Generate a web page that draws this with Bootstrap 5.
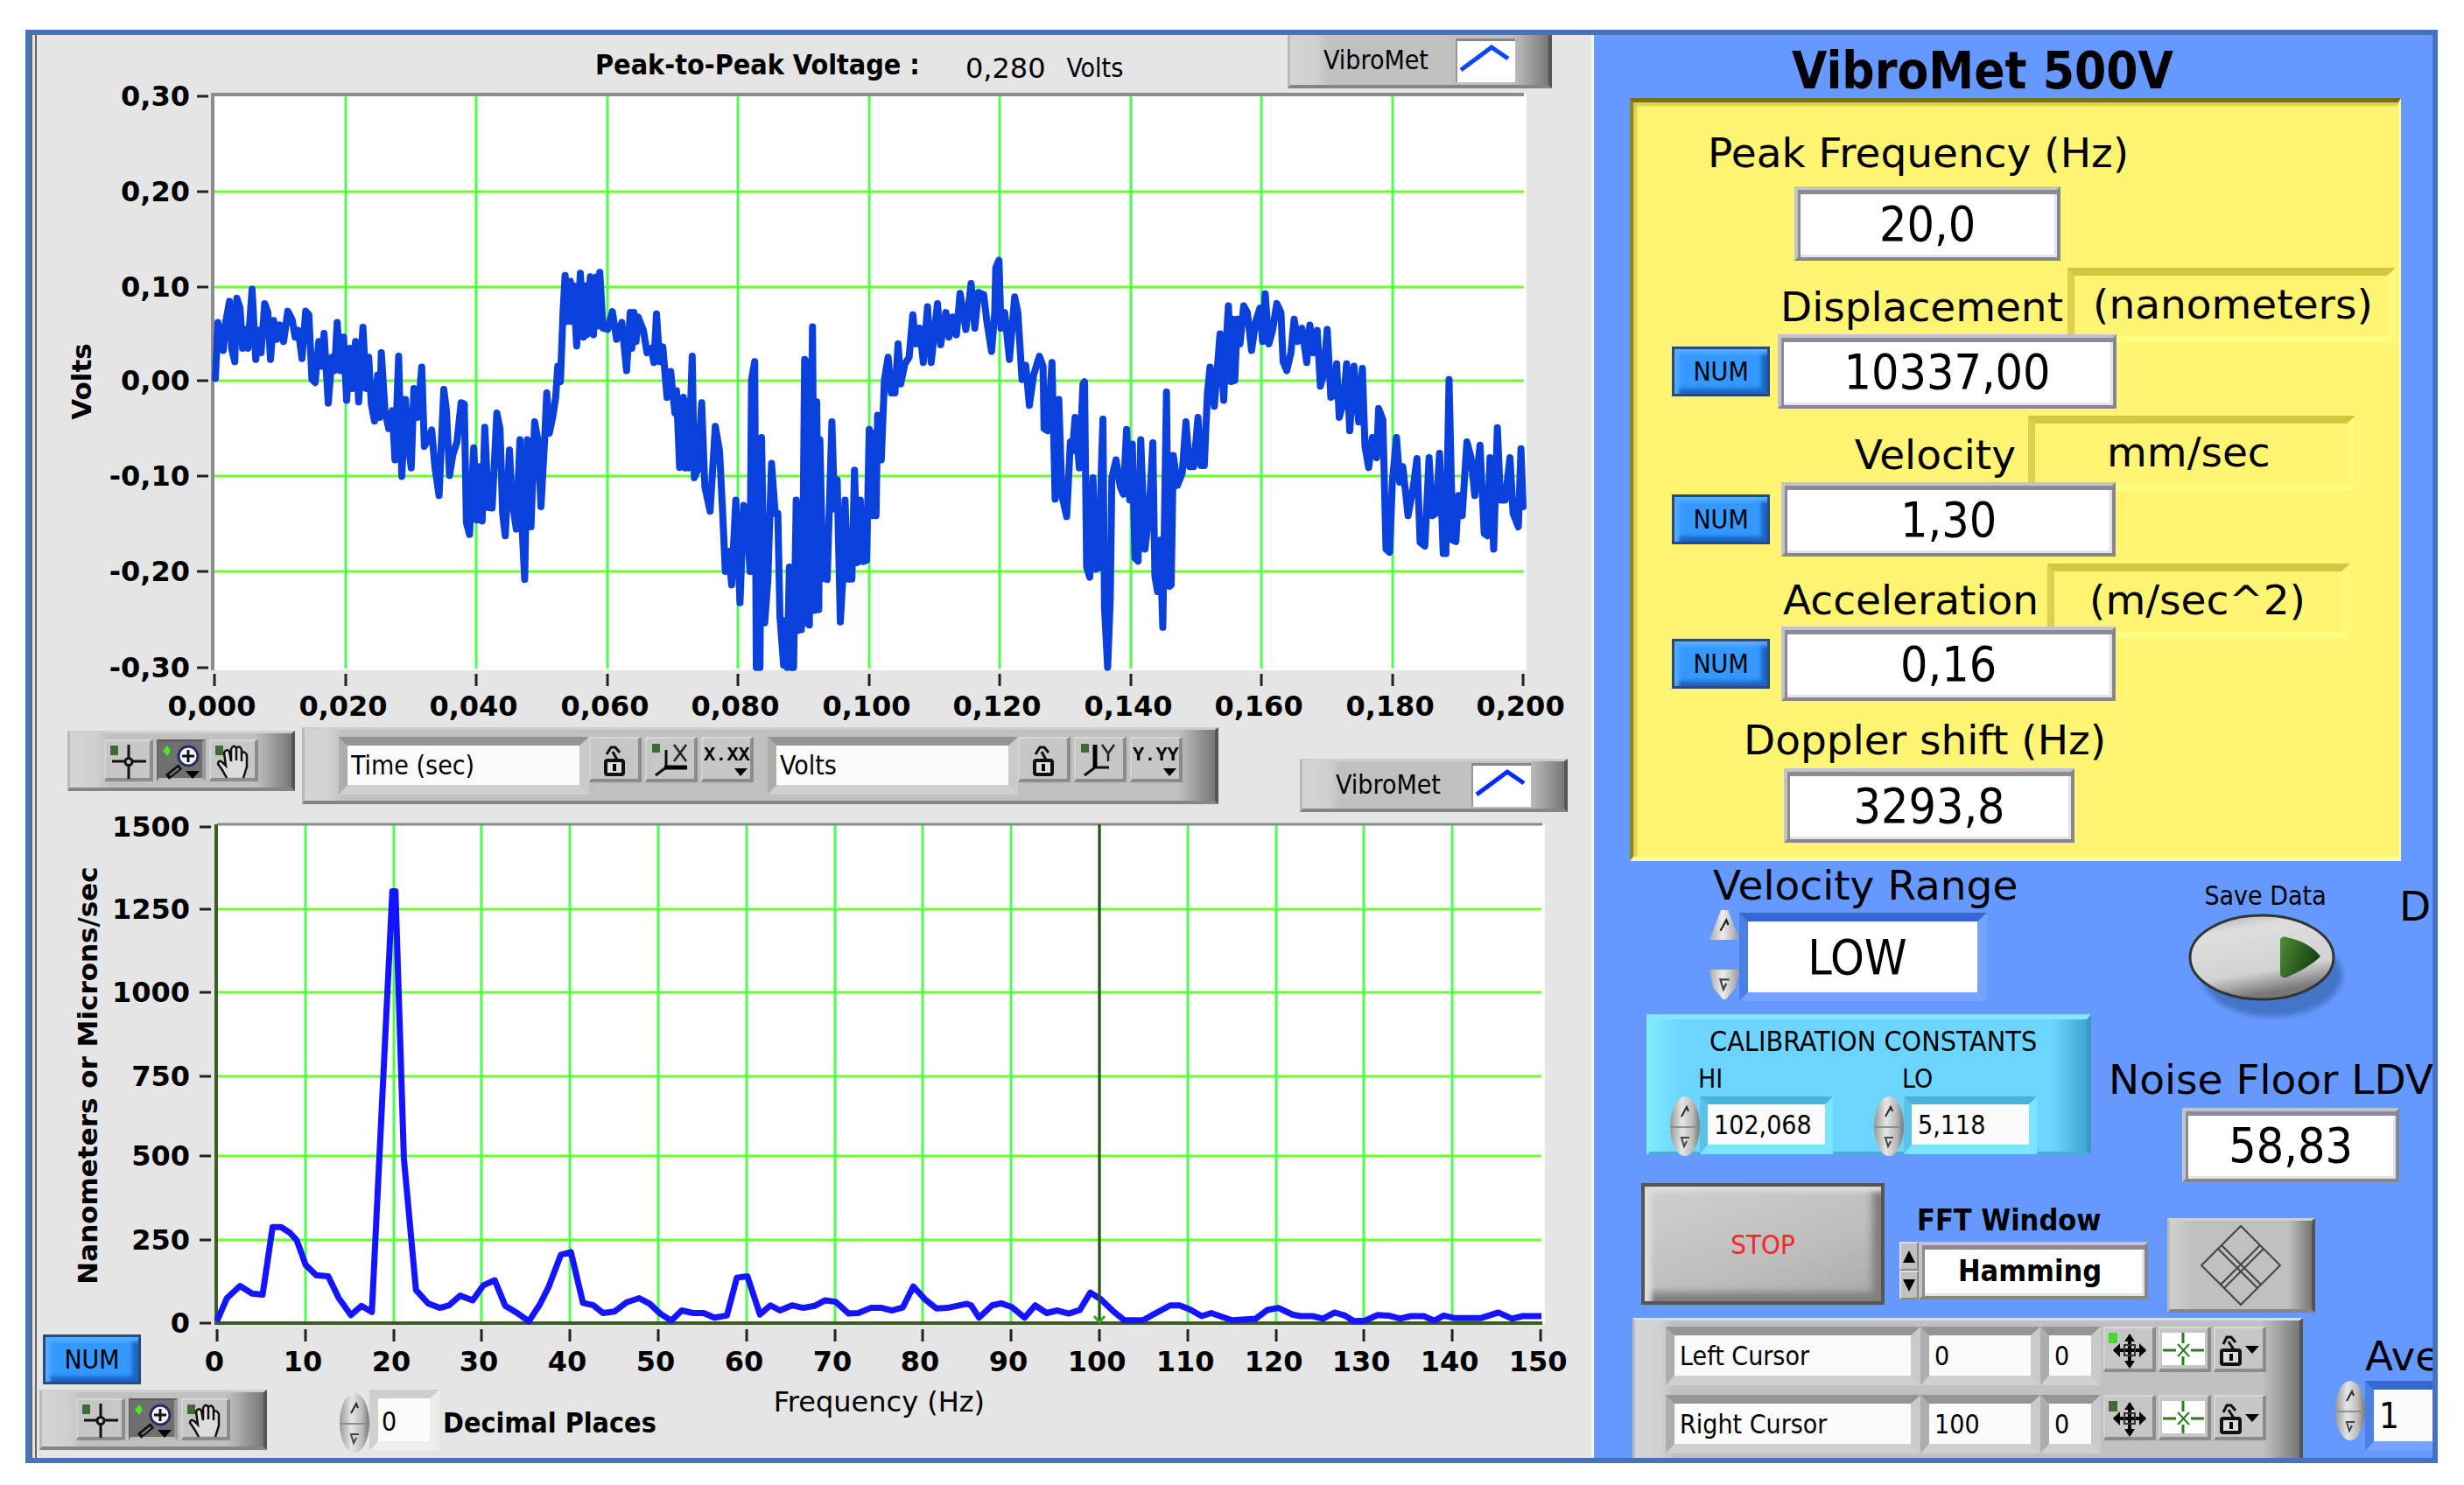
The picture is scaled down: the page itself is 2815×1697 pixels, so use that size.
<!doctype html>
<html lang="en">
<head>
<meta charset="utf-8">
<meta name="viewport" content="width=device-width, initial-scale=1">
<title>VibroMet 500V</title>
<link href="https://cdn.jsdelivr.net/npm/bootstrap@5.3.0/dist/css/bootstrap.min.css" rel="stylesheet">
<style>
:root{--wide:"DejaVu Sans",Verdana,sans-serif;--narrow:"DejaVu Sans Condensed","DejaVu Sans",Tahoma,sans-serif}
body{background:#fff;color:#000;font-family:var(--narrow);font-size:30px;line-height:36px}
.app-frame{margin:34px 30px 27px 29px;border:6px solid #4472c4;overflow:hidden}
button,input,select{font-family:inherit;color:#000;border-radius:0}
button{padding:0;border:0}
svg{display:block}
/* left side */
.scope{flex:0 0 65.09%;background:#e5e5e5;border-left:7px double #666;border-right:3px solid #f7f7f7}
.plot{width:100%;height:auto;overflow:visible}
.plot text{font-family:var(--wide);font-weight:bold;font-size:32px}
.plot .axis-name{font-size:31px}
.grid-h{stroke:#6dff2c;stroke-width:3}
.grid-v{stroke:#4dff4d;stroke-width:3}
.tick{stroke:#222;stroke-width:3}
.head-row{height:66px;padding-left:638px}
.t-wide{font-family:var(--wide);font-size:32px}
.t-bold{font-weight:bold;font-size:32px}
.freq-name{margin-left:134px;margin-top:-4px}
.bar-metal{border:solid;border-width:3px 4px 4px 3px;border-color:#cfcfcf #555 #858585 #b9b9b9;background:linear-gradient(90deg,#d4d4d4 0,#d0d0d0 30px,#c0c0c0 44px,#c0c0c0 calc(100% - 44px),#b4b4b4 calc(100% - 34px),#777 100%)}
.legend-box{width:306px;height:61px;padding:0 38px 0 38px}
.legend-box svg{width:68px;height:50px;background:#fff;border-top:3px solid #888;border-left:2px solid #999}
.legend-top{width:302px;margin-right:45px}
.legend-low{margin-right:27px}
.tools-row{height:110px;padding:5px 0 0 35px}
.palette{width:260px;height:69px;padding:7px 0 0 39px;gap:4px}
.scale-bar{width:1047px;height:88px;padding:8px 0 0 39px}
.tool{width:56px;height:48px;background:#c6c6c6;border:solid;border-width:2px 4px 4px 2px;border-color:#d8d8d8 #8c8c8c #8c8c8c #d4d4d4}
.tool svg{width:56px;height:48px;margin:-2px 0 0 -2px}
.tool.on{background:#6f6f6f;border-color:#5a5a5a #999 #bbb #666}
.tool.tall{width:60px;height:52px}
.tool.tall svg{width:60px;height:52px}
.field{border:solid;border-width:10px 11px 11px 10px;border-color:#959595 #cacaca #d0d0d0 #adadad;background:#fbfbfb;padding:0 0 0 6px;font-size:30px;line-height:36px;min-width:0}
.scale-bar .field{width:286px;height:66px;padding-left:4px}
.dec-field{width:80px;height:70px;border-color:#cfcfcf #ededed #ededed #cfcfcf;padding:4px 0 0 4px}
.dec-spin{margin-left:83px}
.num-btn{width:112px;height:57px;border:3px solid #2a4a78;background:#3399ff;box-shadow:inset 5px 5px 4px #55adff,inset -7px -6px 4px #1b66c4;font-size:30px;line-height:36px}
.num-over{left:7px;bottom:-6px}
.foot-row{height:88px;padding:12px 0 0 3px}
.spin{width:34px;height:68px}
.spin button{height:34px;width:34px;background:linear-gradient(90deg,#999,#e6e6e6 40%,#bbb 75%,#777)}
.spin button:first-child{border-radius:50% 50% 0 0/100% 100% 0 0}
.spin button:last-child{border-radius:0 0 50% 50%/0 0 100% 100%;border-top:2px solid #8d8d8d}
.spin svg{width:14px;height:16px;margin:0 auto}
/* right side */
.control{background:#69f;min-width:0}
.head-title{font-size:58px;line-height:61px;font-weight:bold;height:72px;padding:11px 0 0 226px;margin:0}
.readings{margin:0 36px 0 41px;height:872px;background:#fff573;border:solid;border-width:5px 3px 5px 4px;border-color:#77711c #fffca0 #fffca0 #8c8530;box-shadow:inset 4px 4px 3px #d8cf4c}
.big-label{font-family:var(--wide);font-size:47px;line-height:56px;white-space:nowrap;margin:0}
.line-peak{height:96px;padding:30px 0 0 85px}
.line-doppler{padding:17px 0 4px 126px}
.line-unit{height:76px;margin-top:8px}
.line-unit.snug{height:72px}
.line-unit .big-label{padding-top:17px;text-align:right}
.line-unit.snug .big-label{padding-top:14px}
.w-disp{width:491px}
.w-velo{width:437px}
.w-acce{width:463px}
.unit{height:86px;border:solid;border-width:9px 10px 8px 8px;border-color:#d3c740 #fff87a #fffd80 #dcd14e;background:#fff573;margin-left:5px;padding-left:21px;font-family:var(--wide);font-size:47px;line-height:66px}
.u-disp{width:375px}.u-velo{width:374px;margin-left:14px;padding-left:82px}.u-acce{width:346px;margin-left:10px;padding-left:40px}
.readout{height:85px;border:4px solid;border-color:#c3c3cb #86868c #86868c #c3c3cb;box-shadow:inset 3px 5px 0 #8b8b90,inset -3px -3px 0 #e3e3ea;background:#fff;text-align:center;font-size:55px;line-height:64px;padding:0;position:relative}
.line-value{padding-left:44px;gap:9px}
.line-value .readout{width:382px}
.line-value .readout.widest{width:387px}
.r-peak{width:304px;margin-left:184px}.r-doppler{width:332px;margin-left:172px}.r-noise{width:248px}
.row-a{height:175px}
.vr-block{width:614px;padding-left:132px}
.vr-block .big-label{padding-left:4px}
.arrow-col{width:34px;height:102px}
.arrow-col button{width:34px;height:34px;background:linear-gradient(90deg,#aaa,#eee 45%,#999)}
.arrow-col button:first-child{clip-path:polygon(38% 0,62% 0,100% 100%,0 100%)}
.arrow-col button:last-child{clip-path:polygon(0 0,100% 0,88% 60%,55% 100%,45% 100%,12% 60%)}
.arrow-col svg{width:16px;height:18px;margin:0 auto}
.low-box{width:283px;height:101px;margin-top:3px;border:solid;border-width:10px 11px 10px 10px;border-color:#3468d0 #75a3ff #75a3ff #4a7fe6;background:#fff;font-size:55px;line-height:76px;text-align-last:center;appearance:none;padding:0 12px 0 0}
.save-block{width:210px;padding-top:22px}
.save-block button{background:none}
.row-b{height:193px;padding-left:60px}
.calib{width:508px;height:161px;border:solid;border-width:6px 5px 4px 4px;border-color:#86e6ff #3c98c4 #4badd8 #80ecff;background:linear-gradient(90deg,#7ceaff,#6cd5ff 36px,#6cd5ff calc(100% - 40px),#3fa6d4)}
.calib-title{font-size:32px;padding:7px 0 5px 68px;margin:0}
.calib-row{padding-left:23px}
.calib .field{width:152px;height:66px;border-color:#4db2da #7de4ff #7de4ff #5cc1e8;border-width:9px 9px 11px 9px;padding-left:7px}
.calib label{padding-left:32px;line-height:40px}
.calib-cell{width:233px}
.noise{padding:47px 0 0 20px}
.noise .readout{margin:4px 0 0 84px}
.row-c{height:154px;padding-left:54px}
.stop-btn{width:278px;height:139px;background:linear-gradient(160deg,#d0d0d0,#bdbdbd 60%,#a9a9a9);border:4px solid #555;box-shadow:inset 8px 6px 5px #dcdcdc,inset -10px -10px 8px #7f7f7f;color:#f22;font-size:31px}
.fft{padding:17px 0 0 17px}
.fft label{padding-left:20px;font-size:34px;line-height:50px}
.fft-arrows button{width:22px;height:33px;background:#c0c0c0;border:2px solid;border-color:#ddd #888 #888 #ddd}
.fft-arrows svg{width:18px;height:20px}
.fft select{width:262px;height:66px;font-size:34px;line-height:40px;font-weight:bold;text-align-last:center;appearance:none;padding-right:8px}
.diamond{width:169px;height:108px;margin:40px 0 0 22px;background:linear-gradient(90deg,#d0d0d0,#c0c0c0 25px,#c0c0c0 135px,#777)}
.cursors{margin-left:44px;width:766px;height:160px;padding:7px 0 0 35px;border-bottom:0;border-top-color:#ddd}
.cursor-row{height:78px}
.cursor-row .field{height:67px}
.cursor-row .tool{margin-left:3px}
.c1{width:291px}.c2{width:137px}.c3{width:69px}
.ave{padding:16px 0 0 37px}
.ave .big-label{padding-left:34px}
.ave .field{width:170px;height:80px;border-color:#3468d0 #75a3ff #75a3ff #4a7fe6;font-size:40px}
</style>
<script src="https://cdn.jsdelivr.net/npm/bootstrap@5.3.0/dist/js/bootstrap.bundle.min.js"></script>
</head>
<body>
<svg width="0" height="0" class="position-absolute" aria-hidden="true">
<defs>
<symbol id="i-cross" viewBox="0 0 56 48"><rect x="7" y="7" width="9" height="11" fill="#3f6a33"/><path d="M28 6V21M28 30V45M9 25H23M33 25H48" stroke="#111" stroke-width="3"/><circle cx="28" cy="25.500" r="4" fill="none" stroke="#111" stroke-width="3"/></symbol>
<symbol id="i-zoom" viewBox="0 0 56 48"><path d="M12 7l4 6-4 6-5-6z" fill="#47ea24"/><path d="M27 31L12 43" stroke="#111" stroke-width="7"/><path d="M25 33L15 41" stroke="#888" stroke-width="2"/><ellipse cx="36" cy="19" rx="11" ry="11" fill="#f4f4ff" stroke="#2a2a66" stroke-width="3"/><path d="M36 12V26M29 19H43" stroke="#111" stroke-width="3"/><path d="M33 36H49L41 45z" fill="#000"/></symbol>
<symbol id="i-hand" viewBox="0 0 56 48"><path d="M19 43L15 35 10 28 12 24 17 28 19 30 18 13 22 11 25 24 26 9 30 7 32 10 36 9 38 14 42 15 44 30 39 43z" fill="#ddd"/><rect x="7" y="7" width="9" height="11" fill="#3f6a33"/><path d="M20 44L15 35 10 28Q11 22 16 27L19 30 17 15Q20 10 23 14L25 25V11Q28 5 31 10V24 10Q35 6 37 12V25 15Q41 13 43 18V31L39 44" fill="none" stroke="#111" stroke-width="2.500"/></symbol>
<symbol id="i-lock" viewBox="0 0 60 52"><path d="M20 20L25 12H30L35 18M27 17L33 28" fill="none" stroke="#111" stroke-width="3"/><rect x="19" y="27" width="20" height="16" rx="2" fill="#ddd" stroke="#111" stroke-width="4"/><rect x="27" y="31" width="4" height="8"/></symbol>
<symbol id="i-x" viewBox="0 0 60 52"><rect x="8" y="8" width="9" height="10" fill="#3f6a33"/><path d="M24 15V35L12 44" fill="none" stroke="#111" stroke-width="3"/><path d="M22 35H48" stroke="#000" stroke-width="5"/><path d="M33 9L47 28M47 9L33 28" stroke="#222" stroke-width="2.500"/></symbol>
<symbol id="i-y" viewBox="0 0 60 52"><rect x="8" y="8" width="9" height="10" fill="#3f6a33"/><path d="M24 35L12 44M24 35H40" fill="none" stroke="#111" stroke-width="3"/><path d="M24 9V36" stroke="#000" stroke-width="5"/><path d="M32 9L39 19 46 9M39 19V28" fill="none" stroke="#222" stroke-width="2.500"/></symbol>
<symbol id="i-tri" viewBox="0 0 60 52"><path d="M38 36H53L45 45z"/></symbol>
<symbol id="i-move" viewBox="0 0 60 52"><path d="M30 10V44M12 27H48" stroke="#000" stroke-width="4"/><path d="M30 8l-6 9h12zM30 48l-6-9h12zM11 27l8-8v16zM49 27l-8-8v16z"/><path d="M24 21h12v12H24z" fill="none" stroke="#333" stroke-width="2"/></symbol>
<symbol id="i-star" viewBox="0 0 60 52"><rect x="4" y="7" width="49" height="37" fill="#fff"/><path d="M28 7V19M28 34V44M5 27H20M37 27H52" stroke="#2e7a22" stroke-width="3"/><path d="M22 20L35 34M35 20L22 34" stroke="#2e7a22" stroke-width="2"/></symbol>
<symbol id="i-lockd" viewBox="0 0 60 52"><path d="M11 20L15 12H20L25 18M17 17L24 28" fill="none" stroke="#111" stroke-width="3"/><rect x="9" y="27" width="21" height="16" rx="2" fill="#ddd" stroke="#111" stroke-width="4"/><rect x="18" y="31" width="4" height="8"/><path d="M36 22H52L44 31z"/></symbol>
<symbol id="i-up" viewBox="0 0 14 16"><path d="M3 14L9 3l2 5" fill="none" stroke="#222" stroke-width="2"/></symbol>
<symbol id="i-dn" viewBox="0 0 14 16"><path d="M12 3H3l3 10 3-6" fill="none" stroke="#444" stroke-width="2"/></symbol>
</defs>
</svg>

<main class="app-frame d-flex">
<section class="scope d-flex flex-column" aria-label="Graphs">
  <div class="head-row d-flex align-items-start">
    <label class="t-bold pt-3 text-nowrap" for="ptp">Peak-to-Peak Voltage :</label>
    <output id="ptp" class="t-wide pt-3 mt-1 ms-5 ps-1 text-nowrap">0,280</output><span class="pt-3 mt-1 ms-4">Volts</span>
    <div class="legend-box legend-top bar-metal d-flex align-items-center justify-content-between ms-auto border-top-0"><span>VibroMet</span>
      <svg viewBox="0 0 66 47" aria-hidden="true"><path d="M4 33L39 7 58 20" fill="none" stroke="#0a46ff" stroke-width="5"/></svg></div>
  </div>

  <svg class="plot" viewBox="42 106 1776 720" role="img" aria-label="Voltage against time">
    <rect x="243" y="107" width="1501" height="659" fill="#fff"/>
    <g id="grid-time"></g>
    <path d="M243 766V108H1741" fill="none" stroke="#8c8c8c" stroke-width="4"/>
    <g fill="none" stroke="#0a40dc" stroke-width="8" stroke-linejoin="round" stroke-linecap="round"><path id="wave-time"/></g>
    <text class="axis-name" transform="translate(104 436) rotate(-90)" text-anchor="middle">Volts</text>
  </svg>

  <div class="tools-row d-flex align-items-start">
    <div class="palette bar-metal d-flex align-items-start mt-1">
      <button class="tool" aria-label="Cursor"><svg><use href="#i-cross"/></svg></button>
      <button class="tool on" aria-label="Zoom"><svg><use href="#i-zoom"/></svg></button>
      <button class="tool" aria-label="Pan"><svg><use href="#i-hand"/></svg></button>
    </div>
    <div class="scale-bar bar-metal d-flex align-items-start ms-2">
      <input class="field" aria-label="X scale name" value="Time (sec)">
      <button class="tool tall" aria-label="Lock X"><svg><use href="#i-lock"/></svg></button>
      <button class="tool tall ms-1" aria-label="Autoscale X"><svg><use href="#i-x"/></svg></button>
      <button class="tool tall ms-1 me-3" aria-label="X format"><svg viewBox="0 0 60 52"><text x="3" y="27" font-family="Liberation Mono" font-weight="bold" font-size="22">X.XX</text><use href="#i-tri"/></svg></button>
      <input class="field" aria-label="Y scale name" value="Volts">
      <button class="tool tall" aria-label="Lock Y"><svg><use href="#i-lock"/></svg></button>
      <button class="tool tall ms-1" aria-label="Autoscale Y"><svg><use href="#i-y"/></svg></button>
      <button class="tool tall ms-1" aria-label="Y format"><svg viewBox="0 0 60 52"><text x="3" y="27" font-family="Liberation Mono" font-weight="bold" font-size="22">Y.YY</text><use href="#i-tri"/></svg></button>
    </div>
    <div class="legend-box legend-low bar-metal d-flex align-items-center justify-content-between ms-auto mt-auto mb-2"><span>VibroMet</span>
      <svg viewBox="0 0 66 47" aria-hidden="true"><path d="M4 33L39 7 58 20" fill="none" stroke="#0a28ff" stroke-width="5"/></svg></div>
  </div>

  <div class="position-relative">
  <svg class="plot" viewBox="42 936 1776 640" role="img" aria-label="Spectrum">
    <rect x="246" y="942" width="1519" height="571" fill="#fff"/>
    <g id="grid-freq"></g>
    <path d="M248 942H1762" fill="none" stroke="#8c8c8c" stroke-width="3"/>
    <path d="M247 942V1512H1762" fill="none" stroke="#3c5c28" stroke-width="4"/>
    <path id="wave-freq" fill="none" stroke="#1414ff" stroke-width="7" stroke-linejoin="round"/>
    <path d="M1256 942V1512" stroke="#2c4c20" stroke-width="3"/><path d="M1250 1504l6 7 6-7" fill="none" stroke="#3aa81e" stroke-width="3"/>
    <text class="axis-name" transform="translate(111 1229) rotate(-90)" text-anchor="middle">Nanometers or Microns/sec</text>
  </svg>
  <button class="num-btn num-over position-absolute">NUM</button>
  </div>

  <div class="foot-row d-flex align-items-start">
    <div class="palette bar-metal d-flex align-items-start">
      <button class="tool" aria-label="Cursor"><svg><use href="#i-cross"/></svg></button>
      <button class="tool on" aria-label="Zoom"><svg><use href="#i-zoom"/></svg></button>
      <button class="tool" aria-label="Pan"><svg><use href="#i-hand"/></svg></button>
    </div>
    <div class="spin dec-spin d-flex flex-column mt-1"><button aria-label="More"><svg><use href="#i-up"/></svg></button><button aria-label="Fewer"><svg><use href="#i-dn"/></svg></button></div>
    <input id="dec" class="field dec-field" value="0">
    <label for="dec" class="t-bold text-nowrap pt-3 mt-1 ps-1">Decimal Places</label>
    <span class="t-wide text-nowrap freq-name">Frequency (Hz)</span>
  </div>
</section>

<section class="control flex-fill overflow-hidden" aria-label="Readings and controls">
  <h1 class="head-title">VibroMet 500V</h1>
  <div class="readings">
    <div class="line-peak big-label"><label for="pf">Peak Frequency (Hz)</label></div>
    <input id="pf" class="readout r-peak d-block" readonly value="20,0">
    <div class="line-unit d-flex"><label class="big-label w-disp" for="di">Displacement</label><div class="unit u-disp">(nanometers)</div></div>
    <div class="line-value d-flex align-items-center"><button class="num-btn">NUM</button><input id="di" class="readout widest" readonly value="10337,00"></div>
    <div class="line-unit d-flex"><label class="big-label w-velo" for="ve">Velocity</label><div class="unit u-velo">mm/sec</div></div>
    <div class="line-value d-flex align-items-center"><button class="num-btn">NUM</button><input id="ve" class="readout ms-1" readonly value="1,30"></div>
    <div class="line-unit snug d-flex"><label class="big-label w-acce" for="ac">Acceleration</label><div class="unit u-acce">(m/sec^2)</div></div>
    <div class="line-value d-flex align-items-center"><button class="num-btn">NUM</button><input id="ac" class="readout ms-1" readonly value="0,16"></div>
    <div class="big-label line-doppler"><label for="ds">Doppler shift (Hz)</label></div>
    <input id="ds" class="readout r-doppler d-block" readonly value="3293,8">
  </div>

  <div class="row-a d-flex">
    <div class="vr-block flex-shrink-0"><label class="big-label" for="vr">Velocity Range</label>
      <div class="d-flex"><div class="arrow-col d-flex flex-column justify-content-between"><button aria-label="Up"><svg><use href="#i-up"/></svg></button><button aria-label="Down"><svg><use href="#i-dn"/></svg></button></div>
      <select id="vr" class="low-box"><option>LOW</option></select></div>
    </div>
    <div class="save-block flex-shrink-0 ms-5 text-center"><label for="save">Save Data</label>
      <button id="save" aria-label="Save Data"><svg width="200" height="130" viewBox="0 0 200 130">
        <defs><linearGradient id="pill" x1="0" y1="0" x2=".3" y2="1"><stop offset="0" stop-color="#aaa"/><stop offset=".25" stop-color="#dedede"/><stop offset=".75" stop-color="#d2d2d2"/><stop offset="1" stop-color="#777"/></linearGradient><linearGradient id="leaf" x1="0" y1="0" x2="1" y2=".4"><stop offset="0" stop-color="#4f8f38"/><stop offset="1" stop-color="#17400f"/></linearGradient><filter id="soft"><feGaussianBlur stdDeviation="3"/></filter></defs>
        <ellipse cx="108" cy="73" rx="80" ry="47" fill="#3a6cb8" opacity=".8" filter="url(#soft)"/>
        <ellipse cx="96" cy="52" rx="82" ry="48" fill="url(#pill)" stroke="#333" stroke-width="3"/>
        <path d="M117 31Q121 27 124 29 150 34 163 51 150 64 124 75 119 76 117 72z" fill="url(#leaf)"/></svg></button>
    </div>
    <span class="big-label ps-5 pt-4">D</span>
  </div>

  <div class="row-b d-flex align-items-start">
    <div class="calib flex-shrink-0"><p class="calib-title">CALIBRATION CONSTANTS</p>
      <div class="calib-row d-flex">
        <div class="calib-cell"><label for="hi">HI</label><div class="d-flex"><div class="spin d-flex flex-column"><button aria-label="Up"><svg><use href="#i-up"/></svg></button><button aria-label="Down"><svg><use href="#i-dn"/></svg></button></div><input id="hi" class="field" value="102,068"></div></div>
        <div class="calib-cell"><label for="lo">LO</label><div class="d-flex"><div class="spin d-flex flex-column"><button aria-label="Up"><svg><use href="#i-up"/></svg></button><button aria-label="Down"><svg><use href="#i-dn"/></svg></button></div><input id="lo" class="field" value="5,118"></div></div>
      </div>
    </div>
    <div class="noise flex-shrink-0"><label class="big-label d-block" for="nf">Noise Floor LDV</label><input id="nf" class="readout r-noise d-block" readonly value="58,83"></div>
  </div>

  <div class="row-c d-flex align-items-start">
    <button class="stop-btn">STOP</button>
    <div class="fft"><label class="fw-bold d-block" for="fft">FFT Window</label>
      <div class="d-flex"><div class="fft-arrows d-flex flex-column"><button aria-label="Previous"><svg viewBox="0 0 18 20"><path d="M9 3l7 14H2z"/></svg></button><button aria-label="Next"><svg viewBox="0 0 18 20"><path d="M9 17L2 3h14z"/></svg></button></div>
      <select id="fft" class="readout"><option>Hamming</option></select></div>
    </div>
    <button class="diamond bar-metal" aria-label="Cursor mover"><svg width="161" height="100" viewBox="0 0 161 100"><path d="M81 5L126 50 81 95 36 50zM59 27L104 72M103 27L58 72M55 31L100 76M107 31L62 76" fill="none" stroke="#444" stroke-width="2"/></svg></button>
  </div>

  <div class="d-flex align-items-start">
    <div class="cursors bar-metal flex-shrink-0">
      <div class="cursor-row d-flex align-items-start"><input class="field c1" aria-label="Cursor name" value="Left Cursor"><input class="field c2" aria-label="X" value="0"><input class="field c3" aria-label="Y" value="0">
        <button class="tool tall" aria-label="Move"><svg><rect x="6" y="7" width="10" height="12" fill="#47d82c"/><use href="#i-move"/></svg></button><button class="tool tall" aria-label="Style"><svg><use href="#i-star"/></svg></button><button class="tool tall" aria-label="Lock"><svg><use href="#i-lockd"/></svg></button></div>
      <div class="cursor-row d-flex align-items-start"><input class="field c1" aria-label="Cursor name" value="Right Cursor"><input class="field c2" aria-label="X" value="100"><input class="field c3" aria-label="Y" value="0">
        <button class="tool tall" aria-label="Move"><svg><rect x="6" y="7" width="10" height="12" fill="#3f6a33"/><use href="#i-move"/></svg></button><button class="tool tall" aria-label="Style"><svg><use href="#i-star"/></svg></button><button class="tool tall" aria-label="Lock"><svg><use href="#i-lockd"/></svg></button></div>
    </div>
    <div class="ave flex-shrink-0"><label class="big-label d-block" for="av">Ave</label><div class="d-flex"><div class="spin d-flex flex-column"><button aria-label="Up"><svg><use href="#i-up"/></svg></button><button aria-label="Down"><svg><use href="#i-dn"/></svg></button></div><input id="av" class="field" value="1"></div></div>
  </div>
</section>
</main>

<script>
// Gridlines, ticks and scale numbers of both graphs
function scale(id,xs,ys,box,xl,yl){
  let s='';
  ys.forEach((y,i)=>{ if(i&&i<ys.length-1) s+=`<path class="grid-h" d="M${box.l} ${y}H${box.r}"/>`;
    s+=`<path class="tick" d="M${box.l-18} ${y}H${box.l-5}"/><text x="217" y="${y+11}" text-anchor="end">${yl[i]}</text>`; });
  xs.forEach((x,i)=>{ if(i&&i<xs.length-1) s+=`<path class="grid-v" d="M${x} ${box.t}V${box.b}"/>`;
    s+=`<path class="tick" d="M${x} ${box.b+6}V${box.b+20}"/><text x="${x-3}" y="${box.b+box.d}" text-anchor="middle">${xl[i]}</text>`; });
  document.getElementById(id).innerHTML=s;
}
scale('grid-time',[...Array(11)].map((_,i)=>Math.round(245+149.5*i)),[110,219,328,435,544,653,763],{l:243,r:1741,t:108,b:764,d:54},
  [...Array(11)].map((_,i)=>'0,'+String(i*20).padStart(3,'0')),['0,30','0,20','0,10','0,00','-0,10','-0,20','-0,30']);
scale('grid-freq',[...Array(16)].map((_,i)=>Math.round(248+100.8*i)),[945,1039,1134,1230,1321,1417,1512],{l:246,r:1761,t:942,b:1513,d:54},
  [...Array(16)].map((_,i)=>i*10),[1500,1250,1000,750,500,250,0]);

// Sampled traces, as x,y pairs; sx and sy take samples to drawing units
function trace(id,data,sx,sy,oy){
  const n=data.trim().split(/[\s,]+/).map(Number);let d='';
  for(let i=0;i<n.length;i+=2) d+=(i?'L':'M')+(n[i]*sx).toFixed(1)+' '+(n[i+1]*sy+oy).toFixed(1);
  document.getElementById(id).setAttribute('d',d);
}
trace('wave-time',`410,848 415,722 425,785 430,720 437,675 441,780 447,810 451,668 457,690 462,780 467,738 472,780 480,648 487,805 493,740 497,790 504,680 510,700 515,805 521,718 527,760 533,728 540,765 548,697 556,715 562,755 568,740 575,803 582,697 588,705 594,850 600,857 607,765 612,820 617,747 625,903 632,800 637,830 642,722 648,830 654,755 660,897 666,780 671,870 677,765 683,900 691,733 697,870 702,800 707,905 713,943 719,840 723,935 726,790 733,920 740,960 747,920 752,1030 759,798 765,1067 772,895 778,1000 783,1048 788,870 795,935 803,822 808,1000 815,985 822,963 828,1045 836,1110 845,872 850,920 856,1065 862,1020 870,990 878,902 884,905 888,1170 894,1197 902,1003 908,1165 913,1045 918,1167 923,957 930,1137 937,1138 946,925 952,960 957,1150 962,1200 970,1008 975,1120 983,1185 990,985 994,1180 999,1298 1004,985 1011,1180 1018,945 1024,985 1030,1135 1037,985 1041,880 1046,970 1053,930 1058,890 1062,820 1067,855 1072,700 1076,617 1080,720 1086,630 1089,720 1092,640 1098,775 1105,612 1111,755 1114,640 1117,750 1124,620 1130,750 1136,620 1139,730 1142,610 1148,735 1157,738 1166,698 1174,760 1184,722 1193,830 1200,700 1203,780 1207,700 1211,765 1215,710 1225,740 1232,790 1240,780 1245,812 1250,703 1256,810 1262,777 1270,890 1277,832 1285,925 1288,875 1294,1047 1301,890 1305,1048 1308,900 1311,1048 1318,798 1322,1070 1329,1050 1336,902 1342,1090 1352,1145 1362,955 1370,1010 1376,1150 1381,1280 1388,1235 1393,1310 1401,1120 1409,1350 1416,1132 1422,1150 1428,1280 1431,850 1437,810 1440,1495 1447,1495 1450,980 1456,1395 1462,1300 1469,1038 1476,1150 1481,1150 1485,1380 1492,1490 1495,1390 1499,1495 1503,1270 1506,1495 1509,1280 1511,1495 1516,1120 1519,1412 1522,1130 1526,1410 1529,1200 1532,805 1535,1395 1538,810 1541,1400 1547,732 1551,1367 1555,900 1559,1365 1561,985 1567,1295 1575,1298 1584,945 1589,1140 1594,1075 1600,1393 1605,1290 1609,1120 1614,1297 1622,1297 1627,1053 1632,1260 1638,1120 1643,1258 1650,1255 1655,962 1659,1155 1662,970 1668,1155 1671,930 1678,1030 1684,850 1691,800 1697,880 1704,880 1710,770 1715,860 1723,815 1731,800 1738,705 1744,770 1751,735 1758,812 1766,687 1773,812 1785,680 1791,772 1801,700 1807,755 1814,710 1821,750 1828,657 1839,738 1849,635 1856,735 1863,655 1873,660 1879,720 1888,787 1894,700 1896,600 1902,583 1906,735 1913,700 1922,805 1932,665 1938,700 1946,850 1953,818 1960,908 1968,840 1979,798 1986,820 1988,960 1995,965 2003,812 2009,1118 2016,895 2022,1110 2031,1157 2038,990 2042,1010 2047,935 2055,1048 2062,860 2065,855 2069,1270 2075,1293 2081,1070 2087,1275 2093,1270 2097,1050 2100,939 2103,1360 2109,1495 2114,1340 2117,1070 2125,1030 2133,1090 2139,1107 2145,962 2151,1120 2156,995 2161,1250 2167,1257 2172,985 2180,1230 2188,1150 2195,992 2199,1290 2204,1325 2209,1210 2214,1405 2221,878 2224,1200 2227,1313 2230,1310 2234,1020 2242,1087 2251,1060 2258,945 2265,1045 2273,1045 2281,935 2287,1043 2293,1043 2299,880 2304,822 2312,910 2323,748 2330,897 2335,760 2339,685 2344,855 2347,715 2351,852 2356,715 2361,770 2368,685 2375,700 2383,785 2391,720 2399,690 2404,765 2409,658 2416,770 2423,740 2431,680 2439,700 2443,810 2450,830 2458,790 2464,715 2471,765 2479,735 2488,812 2494,728 2501,790 2508,740 2514,865 2520,840 2527,738 2534,890 2541,885 2545,815 2550,935 2558,900 2564,815 2570,965 2578,820 2587,945 2594,825 2599,1000 2606,1047 2613,980 2621,1025 2625,915 2633,940 2639,1230 2646,1237 2651,1080 2659,980 2665,1080 2671,1045 2681,1155 2691,1090 2698,1027 2704,1215 2713,1223 2721,1025 2727,1155 2734,1150 2741,1015 2748,1240 2753,1240 2759,850 2766,1210 2772,1213 2777,1110 2784,1155 2793,990 2801,1025 2808,1110 2818,997 2826,1195 2832,1200 2837,1025 2844,1230 2851,958 2857,1120 2866,1120 2875,1025 2881,1150 2891,1180 2896,1005 2900,1135`,.6,.5102,0);
trace('wave-freq',`413,1248 432,1203 457,1179 480,1194 500,1196 519,1064 535,1064 552,1075 565,1090 582,1138 602,1158 625,1160 645,1203 668,1236 688,1218 708,1230 747,408 753,408 769,930 792,1187 815,1213 837,1222 855,1217 876,1198 900,1207 920,1178 942,1168 962,1218 985,1232 1007,1248 1028,1215 1045,1180 1068,1118 1087,1113 1110,1212 1130,1217 1148,1232 1170,1229 1193,1211 1217,1203 1237,1214 1257,1233 1278,1247 1298,1227 1320,1232 1340,1232 1360,1241 1384,1237 1403,1163 1423,1160 1447,1235 1467,1217 1485,1227 1508,1217 1529,1222 1551,1218 1571,1207 1591,1210 1616,1233 1634,1232 1658,1222 1679,1222 1698,1227 1719,1221 1739,1180 1761,1205 1783,1223 1804,1222 1841,1214 1849,1217 1864,1241 1889,1217 1906,1213 1926,1220 1951,1241 1971,1217 1993,1232 2013,1227 2035,1233 2056,1226 2076,1192 2096,1205 2119,1228 2141,1246 2176,1246 2201,1232 2228,1217 2246,1217 2266,1225 2288,1238 2306,1232 2346,1246 2391,1243 2413,1226 2434,1222 2461,1235 2476,1238 2499,1238 2519,1243 2541,1231 2561,1237 2578,1248 2599,1247 2623,1236 2644,1237 2666,1243 2686,1238 2711,1238 2731,1247 2749,1237 2771,1242 2819,1242 2853,1231 2879,1243 2899,1238 2935,1238`,.6,.5848,780);
</script>
</body>
</html>
